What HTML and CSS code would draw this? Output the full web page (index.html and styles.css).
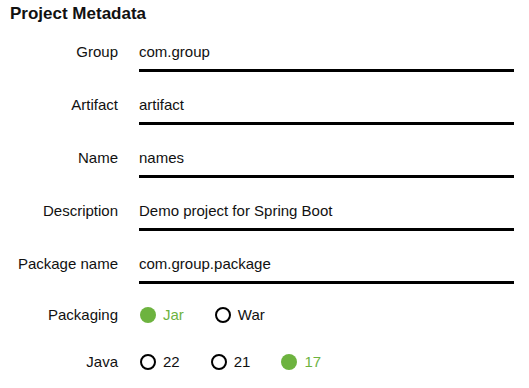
FILE: index.html
```html
<!DOCTYPE html>
<html>
<head>
<meta charset="utf-8">
<link rel="stylesheet" href="styles.css">
</head>
<body>
<section class="panel">
  <h1 class="title">Project Metadata</h1>
  <div class="form">
    <div class="row field">
      <div class="label">Group</div>
      <div class="input">com.group</div>
    </div>
    <div class="row field">
      <div class="label">Artifact</div>
      <div class="input">artifact</div>
    </div>
    <div class="row field">
      <div class="label">Name</div>
      <div class="input">names</div>
    </div>
    <div class="row field">
      <div class="label">Description</div>
      <div class="input">Demo project for Spring Boot</div>
    </div>
    <div class="row field">
      <div class="label">Package name</div>
      <div class="input">com.group.package</div>
    </div>
    <div class="row radios">
      <div class="label">Packaging</div>
      <div class="options">
        <span class="opt selected"><span class="dot"></span>Jar</span>
        <span class="opt"><span class="dot"></span>War</span>
      </div>
    </div>
    <div class="row radios">
      <div class="label">Java</div>
      <div class="options">
        <span class="opt"><span class="dot"></span>22</span>
        <span class="opt"><span class="dot"></span>21</span>
        <span class="opt selected"><span class="dot"></span>17</span>
      </div>
    </div>
  </div>
</section>
</body>
</html>
```
FILE: styles.css
```css
html, body {
  margin: 0;
  padding: 0;
  background: #fff;
}
body {
  font-family: "Liberation Sans", Arial, sans-serif;
  color: #111;
}
.panel {
  width: 529px;
  box-sizing: border-box;
  padding: 0 15px 0 10px;
}
.title {
  margin: 0;
  padding-top: 4px;
  font-size: 17px;
  line-height: 20px;
  font-weight: bold;
  color: #111;
}
.form {
  margin-top: 19px;
  display: flex;
  flex-direction: column;
}
.row {
  display: grid;
  grid-template-columns: 108px 1fr;
  column-gap: 21px;
  align-items: baseline;
  font-size: 15px;
  line-height: 18px;
}
.label {
  text-align: right;
  color: #111;
}
.field {
  margin-bottom: 24px;
}
.input {
  padding-bottom: 8px;
  border-bottom: 3px solid #000;
  color: #111;
}
.radios {
  align-items: center;
  margin-top: -2px;
  margin-bottom: 31px;
}
.radios:last-child {
  margin-bottom: 0;
}
.options {
  display: flex;
  gap: 30px;
  height: 18px;
}
.opt {
  display: inline-flex;
  align-items: center;
  gap: 7px;
  height: 18px;
  color: #111;
}
.dot {
  width: 16px;
  height: 16px;
  box-sizing: border-box;
  border: 2px solid #000;
  border-radius: 50%;
  margin-left: 1px;
}
.opt.selected {
  color: #6db33f;
}
.opt.selected .dot {
  border: none;
  background: #6db33f;
}
```
